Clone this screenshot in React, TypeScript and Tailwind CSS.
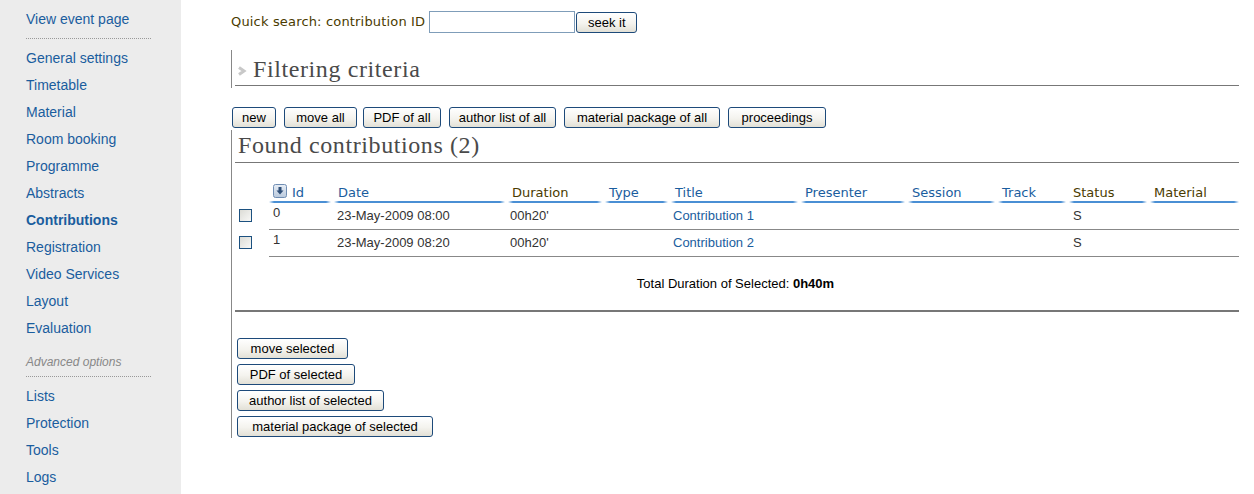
import React from "react"

const sideTop = ["General settings", "Timetable", "Material", "Room booking", "Programme", "Abstracts", "Contributions", "Registration", "Video Services", "Layout", "Evaluation"]
const sideBottom = ["Lists", "Protection", "Tools", "Logs"]

const cols = [
  { label: "Id", w: "w-[65px]", link: true },
  { label: "Date", w: "w-[174px]", link: true },
  { label: "Duration", w: "w-[97px]", link: false },
  { label: "Type", w: "w-[66px]", link: true },
  { label: "Title", w: "w-[130px]", link: true },
  { label: "Presenter", w: "w-[107px]", link: true },
  { label: "Session", w: "w-[90px]", link: true },
  { label: "Track", w: "w-[71px]", link: true },
  { label: "Status", w: "w-[81px]", link: false },
  { label: "Material", w: "w-[89px]", link: false },
]

const rows = [
  { id: "0", date: "23-May-2009 08:00", dur: "00h20'", title: "Contribution 1", status: "S" },
  { id: "1", date: "23-May-2009 08:20", dur: "00h20'", title: "Contribution 2", status: "S" },
]

function Btn({ label, w, cls = "" }: { label: string; w: string; cls?: string }) {
  return (
    <button
      className={`${w} ${cls} block h-[21px] shrink-0 rounded-[3px] border border-[#1d4a7a] bg-[linear-gradient(#ffffff,#f4f3ee_55%,#e2e0d6)] p-0 text-center text-[13px] leading-[19px] text-black`}
      style={{ fontFamily: '"Liberation Sans", Arial, sans-serif' }}
    >
      {label}
    </button>
  )
}

function SortIcon() {
  return (
    <svg width="14" height="14" viewBox="0 0 14 14" className="block shrink-0">
      <defs>
        <linearGradient id="sg" x1="0" y1="0" x2="0" y2="1">
          <stop offset="0" stopColor="#e8eef6" />
          <stop offset="1" stopColor="#b9c9dd" />
        </linearGradient>
      </defs>
      <rect x="0.5" y="0.5" width="13" height="13" rx="2" fill="url(#sg)" stroke="#6f8db3" />
      <rect x="5.5" y="3" width="3" height="4" fill="#2f4f78" />
      <path d="M3.5 6.5 L10.5 6.5 L7 10.5 Z" fill="#2f4f78" />
    </svg>
  )
}

function Checkbox() {
  return <span className="block h-[13px] w-[13px] border border-[#1c5180] bg-[linear-gradient(135deg,#dcdcd6,#f8f8f6)]" />
}

export default function App() {
  const verdana = { fontFamily: '"DejaVu Sans", Verdana, sans-serif' }
  const arial = { fontFamily: '"Liberation Sans", Arial, sans-serif' }
  const serif = { fontFamily: '"Liberation Serif", "Times New Roman", serif' }

  return (
    <div className="flex min-h-[494px] w-[1254px] bg-white" style={arial}>
      {/* Sidebar */}
      <aside className="w-[181px] shrink-0 bg-[#ececec] pl-[26px] pt-[6px] text-[14px] text-[#1a5d9e]">
        <div className="h-[27px] leading-[27px]">View event page</div>
        <div className="mt-[5px] mb-[6px] w-[125px] border-t border-dotted border-[#999]" />
        {sideTop.map((s) => (
          <div key={s} className={`h-[27px] leading-[27px] ${s === "Contributions" ? "font-bold" : ""}`}>
            {s}
          </div>
        ))}
        <div className="mt-[7px] h-[27px] text-[12px] italic leading-[27px] text-[#888]">Advanced options</div>
        <div className="mb-[6px] w-[125px] border-t border-dotted border-[#999]" />
        {sideBottom.map((s) => (
          <div key={s} className="h-[27px] leading-[27px]">
            {s}
          </div>
        ))}
      </aside>

      {/* Main */}
      <main className="flex-1 pl-[50px] pr-[15px] pt-[11px]">
        <div className="flex h-[22px] items-center">
          <span className="mr-[4px] text-[13px] tracking-[0.17px] text-[#4a3b00]" style={verdana}>
            Quick search: contribution ID
          </span>
          <input className="h-[22px] w-[146px] border border-[#7f9db9] bg-white outline-none" />
          <Btn label="seek it" w="w-[61px]" cls="ml-[1px]" />
        </div>

        {/* Filtering criteria */}
        <div className="mt-[17px] h-[38px] border-l border-[#888]">
          <div className="ml-[3px] flex h-[36px] items-center border-b border-[#777] pt-[3px]">
            <svg width="10" height="10" viewBox="0 0 10 10" className="ml-[2px] mr-[6px] mt-[4px]">
              <path d="M2 1.5 L7 5 L2 8.5" fill="none" stroke="#c8c8c8" strokeWidth="3" />
            </svg>
            <span className="text-[24px] tracking-[0.6px] text-[#4a4a4a]" style={serif}>
              Filtering criteria
            </span>
          </div>
        </div>

        {/* Action buttons */}
        <div className="mt-[19px] flex pl-[1px]">
          <Btn label="new" w="w-[44px]" />
          <Btn label="move all" w="w-[73px]" cls="ml-[8px]" />
          <Btn label="PDF of all" w="w-[78px]" cls="ml-[6px]" />
          <Btn label="author list of all" w="w-[107px]" cls="ml-[8px]" />
          <Btn label="material package of all" w="w-[156px]" cls="ml-[8px]" />
          <Btn label="proceedings" w="w-[98px]" cls="ml-[8px]" />
        </div>

        {/* Found contributions */}
        <div className="mt-[2px] border-l border-[#888] pb-[1px]">
          <div className="ml-[3px] flex h-[33px] items-center border-b border-[#777] pb-[3px] pl-[3px]">
            <span className="text-[24px] tracking-[0.6px] text-[#4a4a4a]" style={serif}>
              Found contributions (2)
            </span>
          </div>

          {/* Table header */}
          <div className="flex h-[40px] items-end" style={verdana}>
            <div className="w-[37px] shrink-0" />
            {cols.map((c, i) => (
              <div key={c.label} className={`${c.w} shrink-0`}>
                <div
                  className={`flex h-[17px] items-center pl-[4px] text-[13px] leading-[17px] ${
                    c.link ? "text-[#1a5d9e]" : "text-[#4a3b00]"
                  }`}
                >
                  {c.label === "Id" ? (
                    <span className="flex items-center">
                      <span className="-mt-[4px] mr-[5px]">
                        <SortIcon />
                      </span>
                      Id
                    </span>
                  ) : (
                    c.label
                  )}
                </div>
                <div
                  className={`h-[2px] bg-[linear-gradient(to_right,#ffffff,#4a8fd4_5px,#4a8fd4_calc(100%-5px),#ffffff)] ${
                    i === cols.length - 1 ? "" : "mr-[3px]"
                  }`}
                />
              </div>
            ))}
          </div>

          {/* Rows */}
          {rows.map((r) => (
            <div key={r.id} className="flex text-[13px] text-[#333]">
              <div className="flex w-[37px] shrink-0 items-center pb-[3px] pl-[7px]">
                <Checkbox />
              </div>
              <div className="flex h-[27px] flex-1 items-center border-b border-[#888]">
                <div className="w-[65px] shrink-0 -mt-[7px] pl-[4px]">{r.id}</div>
                <div className="w-[174px] shrink-0 pl-[3px]">{r.date}</div>
                <div className="w-[97px] shrink-0 pl-[2px]">{r.dur}</div>
                <div className="w-[66px] shrink-0" />
                <div className="w-[130px] shrink-0 pl-[2px] text-[#1a5d9e]">{r.title}</div>
                <div className="w-[107px] shrink-0" />
                <div className="w-[90px] shrink-0" />
                <div className="w-[71px] shrink-0" />
                <div className="w-[81px] shrink-0 pl-[4px]">{r.status}</div>
                <div className="w-[89px] shrink-0" />
              </div>
            </div>
          ))}

          <div className="flex h-[53px] items-center justify-center text-[13px] text-black">
            Total Duration of Selected:&nbsp;<b>0h40m</b>
          </div>
          <div className="ml-[3px] h-[2px] bg-[#777]" />

          <div className="mt-[26px] flex flex-col items-start gap-[5px] pl-[5px]">
            <Btn label="move selected" w="w-[111px]" />
            <Btn label="PDF of selected" w="w-[118px]" />
            <Btn label="author list of selected" w="w-[147px]" />
            <Btn label="material package of selected" w="w-[196px]" />
          </div>
        </div>
      </main>
    </div>
  )
}
